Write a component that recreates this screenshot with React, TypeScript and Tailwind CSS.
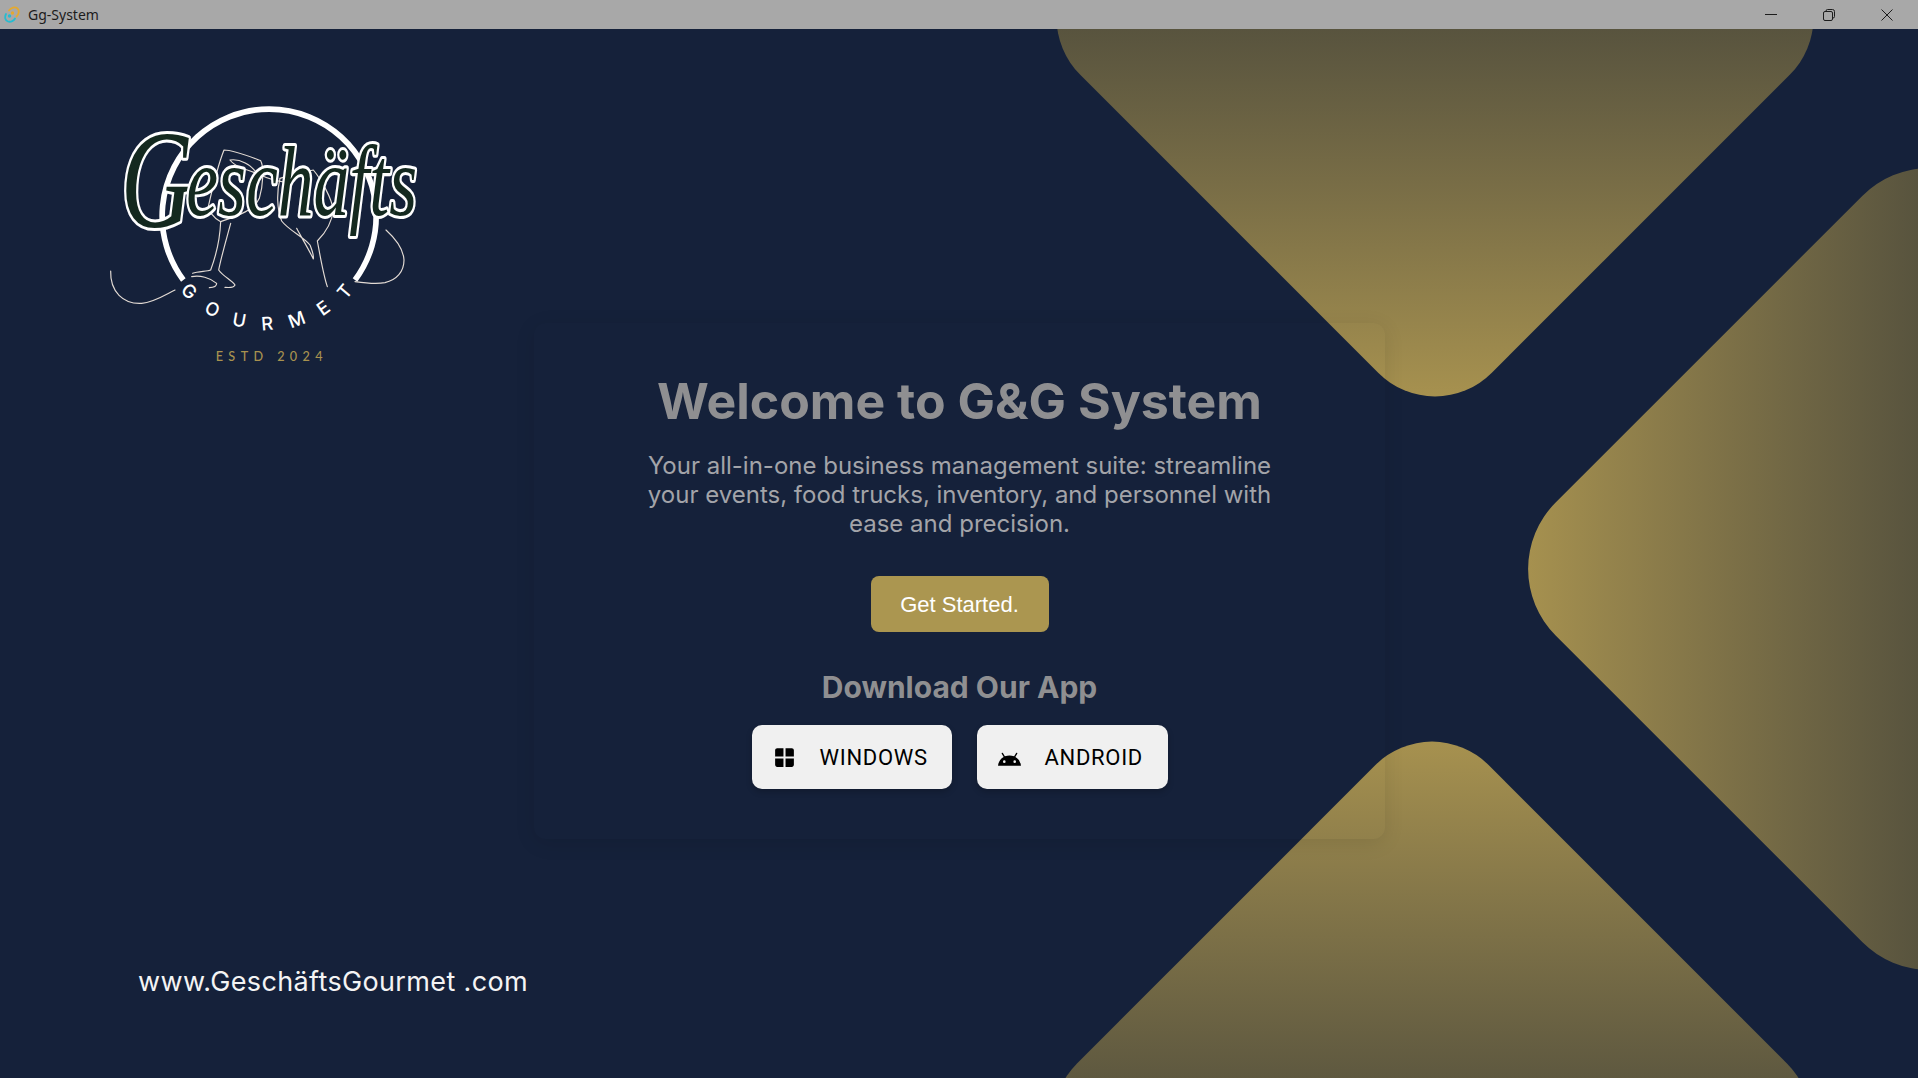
function AppIcon() {
  return (
    <svg width="16" height="17" viewBox="0 0 16 17" fill="none" className="shrink-0">
      <path d="M5 4.5C7 1.5 11 0.5 13.5 2.5C15.5 4.5 15 8 12.5 10.5" stroke="#e5a92e" strokeWidth="1.8" strokeLinecap="round" />
      <path d="M2 8C0.5 11 1 14.5 4 15.5C7 16.5 10 14.5 11 12.5" stroke="#27bcd0" strokeWidth="1.8" strokeLinecap="round" />
      <circle cx="8.5" cy="7" r="1.7" fill="#e5a92e" />
      <circle cx="5.5" cy="10" r="1.7" fill="#27bcd0" />
    </svg>
  );
}

function TitleBar() {
  return (
    <div className="relative z-20 flex h-[29px] shrink-0 items-center justify-between bg-[#a8a8a8] pl-[4px] pr-[2px]">
      <div className="flex items-center gap-[8px]">
        <AppIcon />
        <span className="font-['Noto_Sans',sans-serif] text-[14px] text-[#1c1c1c]">Gg-System</span>
      </div>
      <div className="flex h-full items-center text-[#1c1c1c]">
        <div className="flex w-[58px] justify-center">
          <svg width="12" height="12" viewBox="0 0 12 12" fill="none" stroke="currentColor">
            <path d="M0 5.5H12" />
          </svg>
        </div>
        <div className="flex w-[58px] justify-center">
          <svg width="12" height="12" viewBox="0 0 12 12" fill="none" stroke="currentColor">
            <rect x="0.5" y="2.5" width="9" height="9" rx="1.5" />
            <path d="M3 2.5V2A1.5 1.5 0 0 1 4.5 .5H9.5A2 2 0 0 1 11.5 2.5V7.5A1.5 1.5 0 0 1 10 9" />
          </svg>
        </div>
        <div className="flex w-[58px] justify-center">
          <svg width="12" height="12" viewBox="0 0 12 12" fill="none" stroke="currentColor">
            <path d="M0.5 0.5L11.5 11.5M11.5 0.5L0.5 11.5" />
          </svg>
        </div>
      </div>
    </div>
  );
}

function Logo() {
  return (
    <svg width="340" height="280" viewBox="0 0 1020 840" fill="none">
      <path d="M250 555A321 321 0 1 1 765 555" stroke="#fff" strokeWidth="17" />

      {/* line art: glasses and swooshes */}
      <g stroke="#e3dbd4" strokeWidth="3.5" strokeLinecap="round" strokeLinejoin="round">
        <path d="M32 528C30 590 70 628 125 625C160 623 195 600 225 585" />
        <path d="M372 165C400 165 450 185 482 197C492 215 490 270 478 310C462 345 420 360 362 380C340 370 325 345 325 335C335 290 352 215 372 165Z" />
        <path d="M390 195C420 190 455 210 470 235C440 225 405 215 390 195Z" />
        <path d="M470 235C500 250 530 262 570 262" />
        <path d="M362 380C360 430 345 490 332 525C320 530 295 528 278 535" />
        <path d="M392 385C380 430 365 480 356 525C370 545 395 555 405 570C400 580 385 578 375 577" />
        <path d="M275 545C300 540 330 548 350 565C350 575 340 578 328 578" />
        <path d="M540 250C570 240 610 232 640 225C665 255 695 310 700 345C695 390 670 420 652 438C660 480 670 540 682 575" />
        <path d="M540 250C530 290 530 340 545 378C565 405 610 425 630 450C638 470 642 480 640 492C625 460 600 420 590 400" />
        <path d="M765 560C800 565 830 568 855 563C890 555 912 530 912 495C910 460 880 425 858 405" />
      </g>

      {/* script wordmark, real text with a white halo */}
      <text
        transform="scale(1 1.4)"
        x="62"
        y="282"
        fontFamily="'Liberation Serif', serif"
        fontStyle="italic"
        fill="#14291f"
        stroke="#fff"
        strokeWidth="13"
        strokeLinejoin="round"
        paintOrder="stroke"
      >
        <tspan fontSize="300">G</tspan>
        <tspan dx="-20" dy="-24" fontSize="215">eschäfts</tspan>
      </text>

      <path id="gourmet-arc" d="M200 531A348 348 0 0 0 802 531" />
      <text fill="#fff" fontFamily="Inter, sans-serif" fontWeight="500" fontSize="55" letterSpacing="51" textAnchor="middle">
        <textPath href="#gourmet-arc" startOffset="53.5%">GOURMET</textPath>
      </text>
      <text x="347" y="798" fill="#a8924f" fontFamily="Lato, sans-serif" fontWeight="500" fontSize="38" textLength="321">ESTD 2024</text>
    </svg>
  );
}

function App() {
  return (
    <div className="flex h-screen w-full flex-col overflow-hidden bg-[#15213a] font-['Inter',sans-serif]">
      <TitleBar />
      <main className="relative flex flex-1 overflow-hidden">
        {/* background diamonds */}
        <div className="absolute left-[1144px] top-[-302px] size-[582px] rotate-45 rounded-[80px] bg-linear-to-tl from-[#ae9750] to-[#0b1422]" />
        <div className="absolute left-[1618px] top-[229px] size-[622px] rotate-45 rounded-[94px] bg-linear-to-tr from-[#ae9750] to-[#0b1422]" />
        <div className="absolute left-[1141px] top-[800px] size-[582px] rotate-45 rounded-[80px] bg-linear-to-br from-[#ae9750] to-[#0b1422]" />

        <div className="relative flex w-[534px] shrink-0 flex-col justify-between pb-[77px] pl-[100px] pt-[66px]">
          <Logo />
          <p className="whitespace-nowrap pl-[38px] font-['Inter',sans-serif] text-[27px] leading-[38px] tracking-[0.35px] text-[#f4f4f4]">
            www.GeschäftsGourmet .com
          </p>
        </div>

        <section className="relative mt-[294px] flex h-[516px] w-[851px] flex-col items-center rounded-[12px] bg-white/[0.005] pt-[49px] text-center shadow-[0_4px_20px_rgba(0,0,0,0.1)]">
          <h1 className="text-[50px] font-bold leading-[58px] text-[#8f8f91]">Welcome to G&amp;G System</h1>
          <p className="mt-[21px] w-[640px] text-[24px] leading-[29px] text-[#a3a4a9]">
            Your all-in-one business management suite: streamline your events, food trucks, inventory, and personnel with ease and precision.
          </p>
          <button className="mt-[38px] h-[56px] w-[178px] rounded-[8px] bg-[#ab9650] font-['Liberation_Sans',sans-serif] text-[22px] text-white">
            Get Started.
          </button>
          <h2 className="mt-[37px] text-[30px] font-bold leading-[36px] text-[#8f8f91]">Download Our App</h2>
          <div className="mt-[20px] flex gap-[25px]">
            <button className="flex h-[64px] w-[200px] items-center rounded-[10px] bg-[#f0f0f0] pl-[20px] font-['Roboto',sans-serif] text-[22px] tracking-[0.7px] text-black shadow-[0_3px_6px_rgba(0,0,0,0.2)]">
              <svg width="25" height="25" viewBox="0 0 24 24" fill="currentColor" className="mr-[23px]">
                <path d="M11 11V3H5c-1.1 0-2 .9-2 2v6h8zm2 0h8V5c0-1.1-.9-2-2-2h-6v8zm-2 2H3v6c0 1.1.9 2 2 2h6v-8zm2 0v8h6c1.1 0 2-.9 2-2v-6h-8z" />
              </svg>
              WINDOWS
            </button>
            <button className="flex h-[64px] w-[191px] items-center rounded-[10px] bg-[#f0f0f0] pl-[20px] font-['Roboto',sans-serif] text-[22px] tracking-[0.7px] text-black shadow-[0_3px_6px_rgba(0,0,0,0.2)]">
              <svg width="25" height="25" viewBox="0 0 24 24" fill="currentColor" className="mr-[23px]">
                <path d="M17.6 11.48 19.44 8.3a.63.63 0 0 0-1.09-.63l-1.88 3.24a11.43 11.43 0 0 0-8.94 0L5.65 7.67a.63.63 0 0 0-1.09.63L6.4 11.48A10.81 10.81 0 0 0 1 20h22a10.81 10.81 0 0 0-5.4-8.52zM7 17.25A1.25 1.25 0 1 1 8.25 16 1.25 1.25 0 0 1 7 17.25zm10 0A1.25 1.25 0 1 1 18.25 16 1.25 1.25 0 0 1 17 17.25z" />
              </svg>
              ANDROID
            </button>
          </div>
        </section>
      </main>
    </div>
  );
}

export default App;
